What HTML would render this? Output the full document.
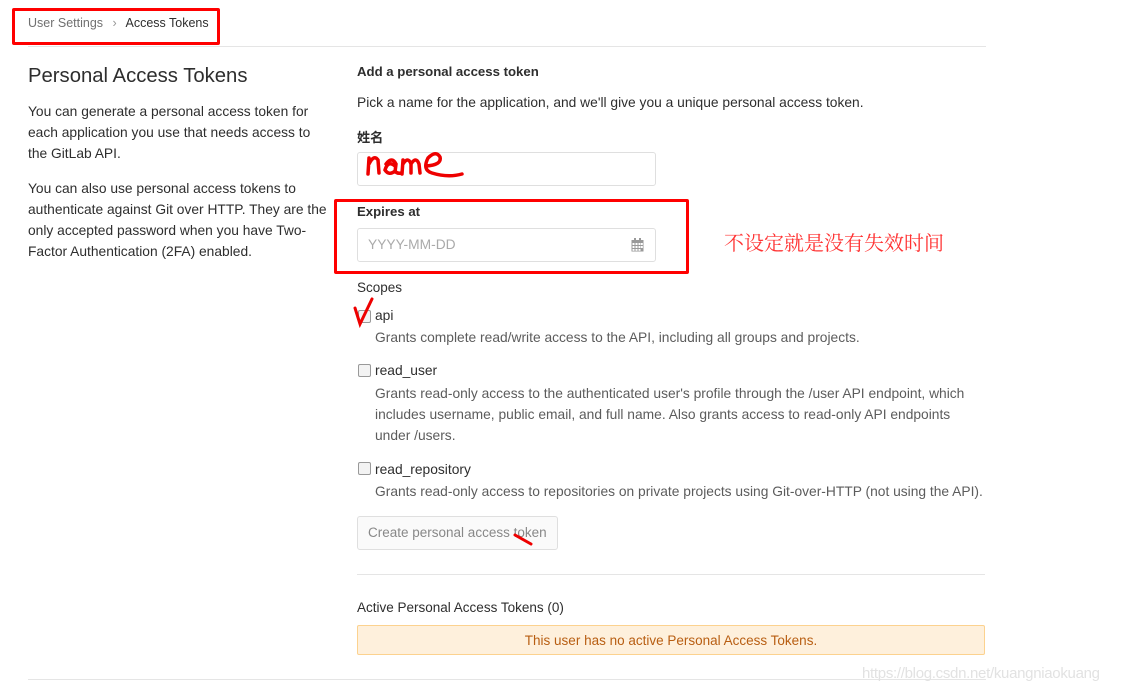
<!DOCTYPE html>
<html><head><meta charset="utf-8"><style>
body{margin:0;width:1132px;height:692px;background:#fff;position:relative;font-family:"Liberation Sans","Noto Sans CJK SC",sans-serif;color:#2e2e2e;overflow:hidden}
.a{position:absolute;white-space:nowrap}
.t{font-size:13.8px;line-height:21px}
.g{color:#5c5c5c}
.b{font-weight:bold;font-size:13.2px}
.box{position:absolute;border:1px solid #dfdfdf;border-radius:3px;background:#fff}
.cb{position:absolute;width:11px;height:11px;border:1px solid #999;border-radius:2px;background:#f3f3f3}
.red{position:absolute;border:3px solid #f00;border-radius:2px}
</style></head><body>
<div class="a" style="left:28px;top:16px;font-size:12.5px;color:#707070">User Settings <span style="margin:0 6px;color:#999">›</span> <span style="color:#2e2e2e">Access Tokens</span></div>
<div class="red" style="left:12px;top:8px;width:202px;height:31px"></div>
<div class="a" style="left:28px;top:46px;width:958px;height:1px;background:#e5e5e5"></div>
<div class="a" style="left:28px;top:65px;font-size:20.3px">Personal Access Tokens</div>
<div class="a t" style="left:28px;top:101px;white-space:normal;width:310px">You can generate a personal access token for<br>each application you use that needs access to<br>the GitLab API.</div>
<div class="a t" style="left:28px;top:178px;white-space:normal;width:310px">You can also use personal access tokens to<br>authenticate against Git over HTTP. They are the<br>only accepted password when you have Two-<br>Factor Authentication (2FA) enabled.</div>
<div class="a b" style="left:357px;top:64px">Add a personal access token</div>
<div class="a t" style="left:357px;top:92px">Pick a name for the application, and we'll give you a unique personal access token.</div>
<div class="a b" style="left:357px;top:127px">姓名</div>
<div class="box" style="left:357px;top:152px;width:297px;height:32px"></div>
<svg class="a" style="left:364px;top:146px" width="106" height="36" viewBox="0 0 106 36"><path d="M4 28 L5 12 M5 18 Q10 8 14 14 L15 27 M22 18 Q28 10 32 18 L31 26 M31 20 Q24 14 21 24 Q25 30 31 25 Q33 28 37 27 M38 28 L39 14 M39 18 Q44 10 47 18 L47 27 M47 18 Q52 10 55 18 L56 27 M62 20 Q78 19 76 11 Q72 4 64 12 Q58 24 68 27 Q84 32 98 28" fill="none" stroke="#e00" stroke-width="3.5" stroke-linecap="round"/></svg>
<div class="a b" style="left:357px;top:204px">Expires at</div>
<div class="box" style="left:357px;top:228px;width:297px;height:32px"></div>
<div class="a" style="left:368px;top:237px;font-size:13.8px;color:#aaa">YYYY-MM-DD</div>
<svg class="a" style="left:631px;top:238px" width="13" height="14" viewBox="0 0 13 14"><rect x="0.5" y="2" width="12" height="11.5" fill="#999"/><rect x="3" y="0" width="2" height="3" fill="#999"/><rect x="8" y="0" width="2" height="3" fill="#999"/><g fill="#fff"><rect x="1.5" y="5" width="2" height="2"/><rect x="4.5" y="5" width="2" height="2"/><rect x="7.5" y="5" width="2" height="2"/><rect x="10" y="5" width="1.8" height="2"/><rect x="1.5" y="8" width="2" height="2"/><rect x="4.5" y="8" width="2" height="2"/><rect x="7.5" y="8" width="2" height="2"/><rect x="10" y="8" width="1.8" height="2"/><rect x="1.5" y="11" width="2" height="1.8"/><rect x="4.5" y="11" width="2" height="1.8"/><rect x="7.5" y="11" width="2" height="1.8"/></g></svg>
<div class="red" style="left:334px;top:199px;width:349px;height:69px"></div>
<div class="a" style="left:724px;top:227px;font-size:20px;color:#f33;font-family:'Noto Serif CJK SC',serif">不设定就是没有失效时间</div>
<div class="a" style="left:357px;top:280px;font-size:13.5px">Scopes</div>
<div class="cb" style="left:358px;top:310px"></div>
<div class="a" style="left:375px;top:308px;font-size:13.8px">api</div>
<svg class="a" style="left:352px;top:296px" width="24" height="32" viewBox="0 0 24 32"><path d="M3 12 L8 28 L20 3" fill="none" stroke="#e00" stroke-width="3" stroke-linecap="round"/></svg>
<div class="a t g" style="left:375px;top:327px">Grants complete read/write access to the API, including all groups and projects.</div>
<div class="cb" style="left:358px;top:364px"></div>
<div class="a" style="left:375px;top:363px;font-size:13.8px">read_user</div>
<div class="a t g" style="left:375px;top:383px">Grants read-only access to the authenticated user's profile through the /user API endpoint, which<br>includes username, public email, and full name. Also grants access to read-only API endpoints<br>under /users.</div>
<div class="cb" style="left:358px;top:462px"></div>
<div class="a" style="left:375px;top:462px;font-size:13.8px">read_repository</div>
<div class="a t g" style="left:375px;top:481px">Grants read-only access to repositories on private projects using Git-over-HTTP (not using the API).</div>
<div class="box" style="left:357px;top:516px;width:199px;height:32px;background:#fafafa"></div>
<div class="a" style="left:368px;top:525px;font-size:13.5px;color:#888">Create personal access token</div>
<svg class="a" style="left:512px;top:530px" width="24" height="18" viewBox="0 0 24 18"><path d="M3 5 L19 14" stroke="#e00" stroke-width="3" stroke-linecap="round"/></svg>
<div class="a" style="left:357px;top:574px;width:628px;height:1px;background:#e5e5e5"></div>
<div class="a" style="left:357px;top:600px;font-size:13.5px">Active Personal Access Tokens (0)</div>
<div class="a" style="left:357px;top:625px;width:626px;height:28px;background:#fef0dc;border:1px solid #fcd28f;border-radius:2px;color:#b85e12;font-size:13.5px;line-height:29px;text-align:center">This user has no active Personal Access Tokens.</div>
<div class="a" style="left:28px;top:679px;width:958px;height:1px;background:#e5e5e5"></div>
<div class="a" style="left:862px;top:665px;font-size:15px;color:#e2e2e2;letter-spacing:-0.3px">https://blog.csdn.net/kuangniaokuang</div>
</body></html>
